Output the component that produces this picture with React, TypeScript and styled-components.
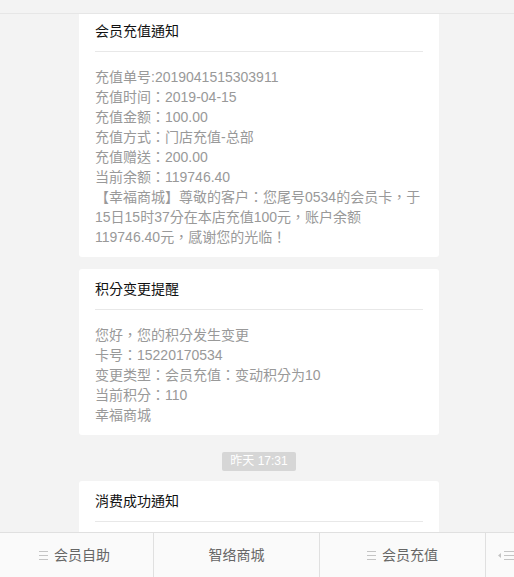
import React from "react";
import styled, { createGlobalStyle } from "styled-components";

const Global = createGlobalStyle`
  html, body { margin: 0; padding: 0; }
  body {
    background: #f3f3f3;
    font-family: "Liberation Sans", "Noto Sans CJK TC", "Noto Sans CJK SC", sans-serif;
  }
`;

const Page = styled.div`
  height: 577px;
  display: flex;
  flex-direction: column;
  background: #f3f3f3;
  overflow: hidden;
`;

const TopBar = styled.div`
  height: 13px;
  flex: none;
  border-bottom: 1px solid #e6e6e6;
  background: #f3f3f3;
`;

const Feed = styled.div`
  flex: 1;
  overflow: hidden;
  display: flex;
  flex-direction: column;
  align-items: center;
  padding-left: 4px;
`;

const Card = styled.div<{ $first?: boolean; $gap?: number }>`
  width: 360px;
  flex: none;
  box-sizing: border-box;
  background: #fff;
  border-radius: 3px;
  padding: 0 16px 10px;
  margin-top: ${(p) => (p.$first ? "-3px" : `${p.$gap ?? 12}px`)};
`;

const Title = styled.div`
  font-size: 14px;
  line-height: 20px;
  color: #111;
  padding: 10px 0 10px;
  border-bottom: 1px solid #e8e8e8;
`;

const Body = styled.div<{ $blank?: boolean }>`
  padding-top: 15px;
  font-size: 14px;
  line-height: 20px;
  color: #999;
  min-height: ${(p) => (p.$blank ? "60px" : "0")};
`;

const Line = styled.div`
  white-space: nowrap;
`;

const Stamp = styled.div`
  margin-top: 17px;
  height: 19px;
  line-height: 19px;
  padding: 0 8px;
  border-radius: 2px;
  background: #d6d6d6;
  color: #fff;
  font-size: 12px;
  flex: none;
`;

const TabBar = styled.div`
  height: 44px;
  flex: none;
  border-top: 1px solid #e0e0e0;
  background: #fafafa;
  display: flex;
`;

const Tab = styled.div<{ $w?: number }>`
  ${(p) => (p.$w ? `width: ${p.$w}px; flex: none;` : "flex: 1;")}
  box-sizing: border-box;
  display: flex;
  align-items: center;
  justify-content: center;
  gap: 6px;
  font-size: 14px;
  color: #666;
  border-left: 1px solid #e0e0e0;
  &:first-child { border-left: none; padding-right: 4px; }
`;

const Label = styled.span`
  white-space: nowrap;
  line-height: 20px;
`;

const EdgeTab = styled(Tab)`
  justify-content: flex-start;
  padding-left: 12px;
`;

const Menu = ({ arrow }: { arrow?: boolean }) => (
  <svg width={arrow ? 16 : 9} height="9" viewBox={arrow ? "0 0 16 9" : "0 0 9 9"}>
    {arrow && <polygon points="0,4.5 3,2 3,7" fill="#c4c4c4" />}
    {[0.5, 4.5, 8.5].map((y) => (
      <line key={y} x1={arrow ? 6 : 0} x2={arrow ? 16 : 9} y1={y} y2={y} stroke="#c4c4c4" strokeWidth="1" />
    ))}
  </svg>
);

export default function App() {
  return (
    <Page>
      <Global />
      <TopBar />
      <Feed>
        <Card $first>
          <Title>会员充值通知</Title>
          <Body>
            <Line>充值单号:2019041515303911</Line>
            <Line>充值时间：2019-04-15</Line>
            <Line>充值金额：100.00</Line>
            <Line>充值方式：门店充值-总部</Line>
            <Line>充值赠送：200.00</Line>
            <Line>当前余额：119746.40</Line>
            <Line>【幸福商城】尊敬的客户：您尾号0534的会员卡，于</Line>
            <Line>15日15时37分在本店充值100元，账户余额</Line>
            <Line>119746.40元，感谢您的光临！</Line>
          </Body>
        </Card>
        <Card>
          <Title>积分变更提醒</Title>
          <Body>
            <Line>您好，您的积分发生变更</Line>
            <Line>卡号：15220170534</Line>
            <Line>变更类型：会员充值：变动积分为10</Line>
            <Line>当前积分：110</Line>
            <Line>幸福商城</Line>
          </Body>
        </Card>
        <Stamp>昨天 17:31</Stamp>
        <Card $gap={10}>
          <Title>消费成功通知</Title>
          <Body $blank />
        </Card>
      </Feed>
      <TabBar>
        <Tab $w={153}>
          <Menu />
          <Label>会员自助</Label>
        </Tab>
        <Tab $w={166}>
          <Label>智络商城</Label>
        </Tab>
        <Tab $w={166}>
          <Menu />
          <Label>会员充值</Label>
        </Tab>
        <EdgeTab>
          <Menu arrow />
        </EdgeTab>
      </TabBar>
    </Page>
  );
}
